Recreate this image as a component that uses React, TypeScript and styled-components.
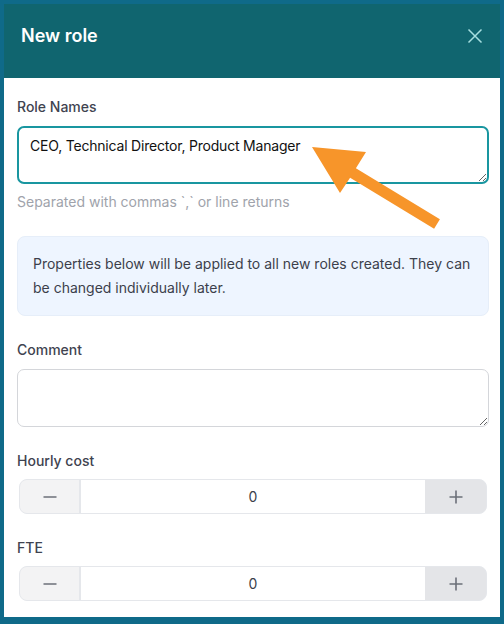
import React from "react";
import styled, { createGlobalStyle } from "styled-components";

const Global = createGlobalStyle`
  html, body { margin: 0; padding: 0; background: #0f6a89; }
  body { font-family: Inter, "Noto Sans", sans-serif; -webkit-font-smoothing: antialiased; }
  * { box-sizing: border-box; }
`;

const Frame = styled.div`
  position: relative;
  width: 504px;
  height: 624px;
  background: #0f6a89;
  padding: 4px 4px 0 4px;
  overflow: hidden;
`;

const Dialog = styled.div`
  background: #ffffff;
  height: 613px;
  display: flex;
  flex-direction: column;
`;

const Header = styled.div`
  height: 74px;
  flex: none;
  background: #10656f;
  display: flex;
  align-items: flex-start;
  justify-content: space-between;
  padding: 20px 17px 0 17px;
`;

const Title = styled.h2`
  margin: 0;
  font-size: 18px;
  line-height: 24px;
  font-weight: 600;
  color: #ffffff;
`;

const CloseButton = styled.button`
  border: 0;
  background: transparent;
  padding: 0;
  width: 24px;
  height: 24px;
  display: flex;
  align-items: center;
  justify-content: center;
  color: #a6dfe0;
  margin-right: -4px;
`;

const Body = styled.div`
  display: flex;
  flex-direction: column;
  gap: 24px;
  padding: 19px 11px 0 13px;
`;

const Field = styled.div`
  display: flex;
  flex-direction: column;
  gap: 8px;
`;

const Label = styled.label`
  font-size: 14px;
  line-height: 20px;
  font-weight: 500;
  color: #3f4350;
`;

const TextArea = styled.textarea<{ $focused?: boolean }>`
  display: block;
  width: 100%;
  height: 58px;
  margin-top: 1px;
  resize: vertical;
  font-family: Inter, "Noto Sans", sans-serif;
  font-size: 14px;
  line-height: 20px;
  letter-spacing: -0.2px;
  color: #111111;
  padding: ${(p) => (p.$focused ? "8px 11px" : "9px 12px")};
  border-radius: 7px;
  outline: none;
  border: ${(p) => (p.$focused ? "2px solid #1996a0" : "1px solid #d4d6da")};
  background: #fff;
`;

const Helper = styled.div`
  font-size: 14px;
  line-height: 20px;
  color: #a0a3ab;
`;

const InfoBox = styled.div`
  background: #eef5ff;
  border: 1px solid #e6eef9;
  border-radius: 8px;
  padding: 15px 15px;
  font-size: 14px;
  line-height: 24px;
  color: #3c3f4b;
`;

const Stepper = styled.div`
  display: flex;
  height: 35px;
  margin: 0 2px;
  border: 1px solid #e5e7eb;
  border-radius: 8px;
  overflow: hidden;
  background: #e5e7eb;
`;

const StepButton = styled.button<{ $dark?: boolean }>`
  flex: none;
  width: ${(p) => (p.$dark ? "61px" : "59px")};
  border: 0;
  padding: 0;
  background: ${(p) => (p.$dark ? "#e4e5e8" : "#f3f3f4")};
  display: flex;
  align-items: center;
  justify-content: center;
  color: #6b6f78;
`;

const StepInput = styled.input`
  flex: 1;
  min-width: 0;
  border: 0;
  border-left: 2px solid #e5e7eb;
  background: #ffffff;
  text-align: center;
  font-family: Inter, "Noto Sans", sans-serif;
  font-size: 14px;
  color: #3c3f4b;
  outline: none;
  padding: 0;
`;

const ArrowOverlay = styled.svg`
  position: absolute;
  left: 0;
  top: 0;
  pointer-events: none;
`;

const Minus = () => (
  <svg width="14" height="14" viewBox="0 0 14 14">
    <line x1="0.5" y1="7" x2="13.5" y2="7" stroke="currentColor" strokeWidth="1.6" />
  </svg>
);

const Plus = () => (
  <svg width="14" height="14" viewBox="0 0 14 14">
    <line x1="0.5" y1="7" x2="13.5" y2="7" stroke="currentColor" strokeWidth="1.6" />
    <line x1="7" y1="0.5" x2="7" y2="13.5" stroke="currentColor" strokeWidth="1.6" />
  </svg>
);

const NumberField = ({ label }: { label: string }) => (
  <Field>
    <Label>{label}</Label>
    <Stepper>
      <StepButton aria-label="decrease">
        <Minus />
      </StepButton>
      <StepInput defaultValue="0" />
      <StepButton $dark aria-label="increase">
        <Plus />
      </StepButton>
    </Stepper>
  </Field>
);

export default function App() {
  return (
    <>
      <Global />
      <Frame>
        <Dialog>
          <Header>
            <Title>New role</Title>
            <CloseButton aria-label="close">
              <svg width="16" height="16" viewBox="0 0 16 16">
                <path d="M1.5 1.5 L14.5 14.5 M14.5 1.5 L1.5 14.5" stroke="currentColor" strokeWidth="1.5" fill="none" />
              </svg>
            </CloseButton>
          </Header>
          <Body>
            <Field>
              <Label>Role Names</Label>
              <TextArea $focused defaultValue="CEO, Technical Director, Product Manager" />
              <Helper>Separated with commas `,` or line returns</Helper>
            </Field>
            <InfoBox>
              Properties below will be applied to all new roles created. They can be changed individually later.
            </InfoBox>
            <Field>
              <Label>Comment</Label>
              <TextArea />
            </Field>
            <NumberField label="Hourly cost" />
            <NumberField label="FTE" />
          </Body>
        </Dialog>
        <ArrowOverlay width="504" height="624" viewBox="0 0 504 624">
          <polygon
            points="312,147 366,152 355.9,168.3 439.9,219.3 434.1,228.7 350.1,177.7 340,193"
            fill="#f7952a"
          />
        </ArrowOverlay>
      </Frame>
    </>
  );
}
